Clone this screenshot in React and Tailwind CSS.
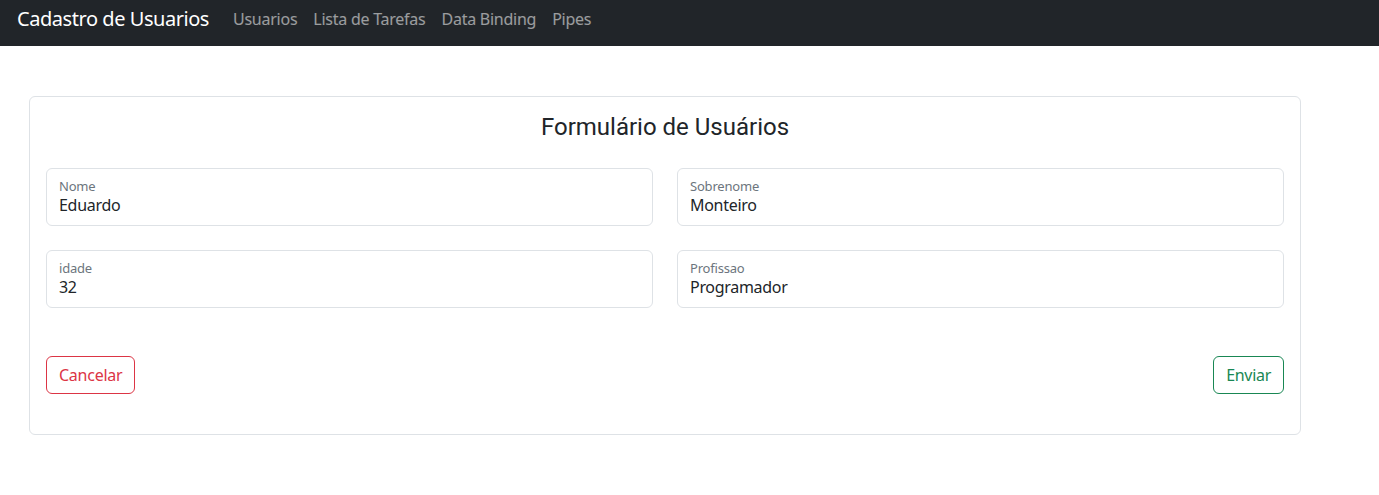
import React from 'react';

const font = { fontFamily: '"Noto Sans", "Open Sans", sans-serif' };

const links = ['Usuarios', 'Lista de Tarefas', 'Data Binding', 'Pipes'];

const FloatingField = ({ label, value }) => (
  <div className="relative h-[58px] rounded-[6px] border border-[#dee2e6] bg-white">
    <span className="absolute left-[12px] top-[7px] text-[13px] leading-[20px] tracking-[-0.2px] text-[#6c757d]">{label}</span>
    <span className="absolute left-[12px] top-[24px] text-[16px] leading-[24px] tracking-[-0.3px] text-[#212529]">{value}</span>
  </div>
);

export default function App() {
  return (
    <div className="min-h-[495px] bg-white" style={font}>
      <nav className="flex h-[46px] items-start bg-[#212529] pl-[17px] pt-[4px]">
        <span className="mr-[16px] text-[20px] leading-[30px] tracking-[-0.45px] text-white">Cadastro de Usuarios</span>
        <ul className="flex pt-[3px]">
          {links.map((l) => (
            <li key={l} className="px-[8px] text-[16px] leading-[24px] tracking-[-0.25px] text-white/55">{l}</li>
          ))}
        </ul>
      </nav>

      <div className="ml-[29px] mt-[50px] w-[1272px] rounded-[6px] border border-[#dee2e6] px-[16px] pb-[40px] pt-[16px]">
        <h3 className="text-center text-[24px] leading-[29px] text-[#212529]" style={{ fontFamily: 'Roboto, sans-serif' }}>
          Formulário de Usuários
        </h3>

        <div className="mt-[26px] grid grid-cols-2 gap-x-[24px] gap-y-[24px]">
          <FloatingField label="Nome" value="Eduardo" />
          <FloatingField label="Sobrenome" value="Monteiro" />
          <FloatingField label="idade" value="32" />
          <FloatingField label="Profissao" value="Programador" />
        </div>

        <div className="mt-[48px] flex justify-between">
          <button className="h-[38px] rounded-[6px] border border-[#dc3545] px-[12px] text-[16px] tracking-[-0.25px] text-[#dc3545]">Cancelar</button>
          <button className="h-[38px] rounded-[6px] border border-[#198754] px-[12px] text-[16px] tracking-[-0.3px] text-[#198754]">Enviar</button>
        </div>
      </div>
    </div>
  );
}
